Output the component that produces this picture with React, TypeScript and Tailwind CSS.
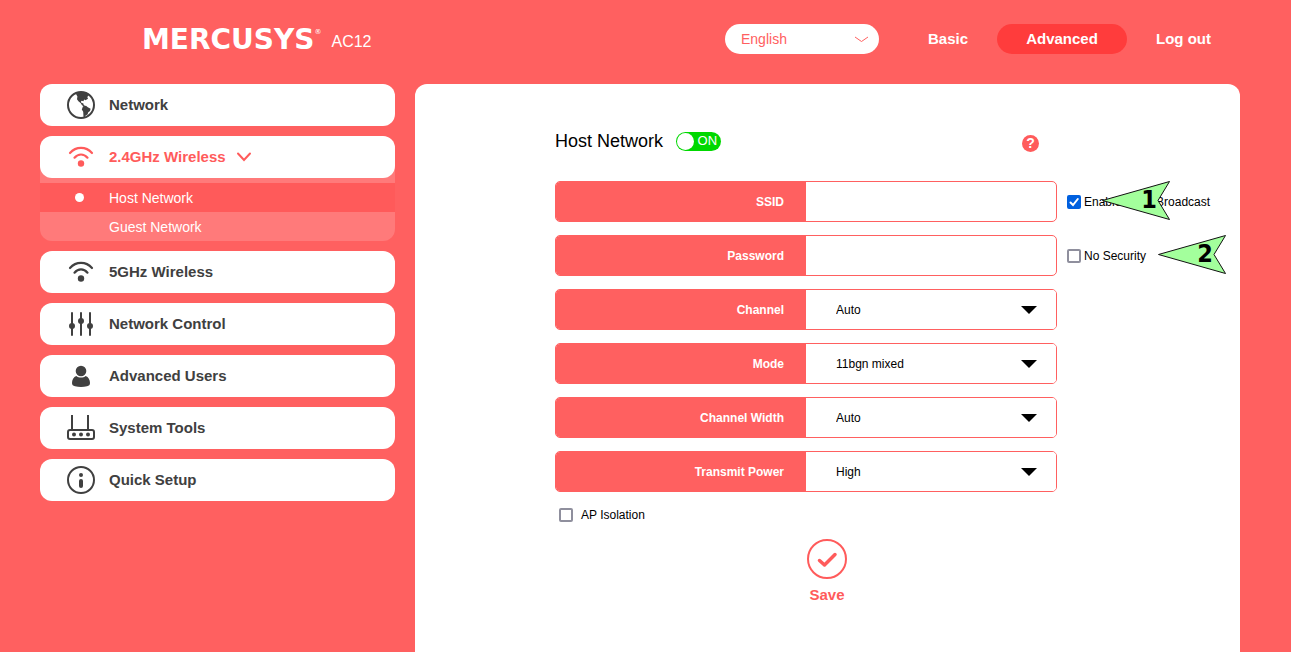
import { useState } from 'react';
import type { ReactNode } from 'react';

const GlobeIcon = () => (
  <svg width="28" height="28" viewBox="0 0 28 28" fill="none">
    <circle cx="14" cy="14" r="13" stroke="currentColor" strokeWidth="2" />
    <path
      d="M9 3 12 1h6l3 1.500.5 2L20.300 6l.7 1.800-2.500 1.400-1.300-.7-.8 1.700-1.600-.4-.9.800.6 1.400 1.700.3.6 1.700 1.200.8-1 .6-2-1.200-1.400-2.200-2.200-1.700L10 8.200l.4-2.600z"
      fill="currentColor"
    />
    <path d="m16 15.200 3-.4 1.800 1.500 2.800 1.500-.6 2.200-1.700 1.300-.8 2.200-1.800 1-1 2-1.200-.5-.3-5.200-1.400-2.400z" fill="currentColor" />
  </svg>
);

const WifiIcon = () => (
  <svg width="28" height="28" viewBox="0 0 28 28" fill="none" stroke="currentColor" strokeWidth="2.200" strokeLinecap="round">
    <path d="M3 10C9 3.200 19 3.200 25 10" />
    <path d="M7.500 14.700c3.700-4.300 9.300-4.300 13 0" />
    <circle cx="14" cy="20.500" r="3.200" fill="currentColor" stroke="none" />
  </svg>
);

const SlidersIcon = () => (
  <svg width="28" height="28" viewBox="0 0 28 28" fill="currentColor" stroke="currentColor" strokeWidth="2" strokeLinecap="round">
    <path d="M5 3v22M14 3v22M23 3v22" />
    <circle cx="5" cy="16" r="2" />
    <circle cx="14" cy="11" r="2" />
    <circle cx="23" cy="16" r="2" />
  </svg>
);

const UserIcon = () => (
  <svg width="28" height="28" viewBox="0 0 28 28" fill="currentColor">
    <circle cx="14" cy="9" r="5.300" />
    <path d="M9.300 14c2.700 2 6.700 2 9.400 0 2.800 1 4.300 3.700 4.300 7 0 1.800-1 2.900-3 3.300-3.600.9-8.400.9-12 0-2-.4-3-1.500-3-3.300 0-3.300 1.500-6 4.300-7z" />
  </svg>
);

const RouterIcon = () => (
  <svg width="28" height="28" viewBox="0 0 28 28" fill="none" stroke="currentColor" strokeWidth="2">
    <path d="M5 1v15M21 1v15" />
    <rect x="1" y="16" width="26" height="9" rx="2" />
    <g fill="currentColor" stroke="none">
      <circle cx="7" cy="20.500" r="2" />
      <circle cx="14" cy="20.500" r="2" />
      <circle cx="21" cy="20.500" r="2" />
    </g>
  </svg>
);

const InfoIcon = () => (
  <svg width="28" height="28" viewBox="0 0 28 28" fill="none" stroke="currentColor">
    <circle cx="14" cy="14" r="13" strokeWidth="2" />
    <circle cx="14" cy="9" r="2" fill="currentColor" stroke="none" />
    <path d="M14 15v5" strokeWidth="4" strokeLinecap="round" />
  </svg>
);

const menu = [
  { title: 'Network', icon: <GlobeIcon /> },
  { title: '2.4GHz Wireless', icon: <WifiIcon />, children: ['Host Network', 'Guest Network'] },
  { title: '5GHz Wireless', icon: <WifiIcon /> },
  { title: 'Network Control', icon: <SlidersIcon /> },
  { title: 'Advanced Users', icon: <UserIcon /> },
  { title: 'System Tools', icon: <RouterIcon /> },
  { title: 'Quick Setup', icon: <InfoIcon /> },
];

const selects = [
  { id: 'channel', label: 'Channel', options: ['Auto', '1', '6', '11'] },
  { id: 'mode', label: 'Mode', options: ['11bgn mixed', '11bg mixed'] },
  { id: 'width', label: 'Channel Width', options: ['Auto', '20MHz', '40MHz'] },
  { id: 'power', label: 'Transmit Power', options: ['High', 'Middle', 'Low'] },
];

const Marker = ({ text }: { text: string }) => (
  <svg width="70" height="42" viewBox="0 0 70 42">
    <path d="M1.500 20.500 68.500 1.500 57 20.500 68.500 39.500z" fill="#a3ff9c" stroke="#111" strokeWidth="1" />
    <text x="48" y="28" textAnchor="middle" fill="#000" className="font-['DejaVu_Sans_Condensed','DejaVu_Sans',sans-serif] text-[25px] font-bold">
      {text}
    </text>
  </svg>
);

type FieldProps = { id: string; label: string; children: ReactNode; extra?: ReactNode };

const Field = ({ id, label, children, extra }: FieldProps) => (
  <div className="flex items-center gap-2.5">
    <div className="flex h-[41px] w-[502px] overflow-hidden rounded-[5px] border border-[#ff6060]">
      <label htmlFor={id} className="flex w-1/2 items-center justify-end bg-[#ff6060] pr-[22px] font-bold text-white">
        {label}
      </label>
      <div className="relative w-1/2">{children}</div>
    </div>
    {extra}
  </div>
);

type CheckProps = { label: string; checked?: boolean; className?: string };

const Check = ({ label, checked = false, className = 'gap-[3px]' }: CheckProps) => (
  <label className={`flex items-center whitespace-nowrap ${className}`}>
    <span className="relative flex">
      <input
        type="checkbox"
        defaultChecked={checked}
        className="peer size-3.5 appearance-none rounded-xs border-2 border-[#8f8f9d] bg-white checked:border-[#0060df] checked:bg-[#0060df]"
      />
      <svg className="pointer-events-none absolute inset-0 hidden peer-checked:block" width="14" height="14" fill="none" stroke="#fff" strokeWidth="2" strokeLinecap="round">
        <path d="m3.500 7.500 2.500 2.500 4.800-6" />
      </svg>
    </span>
    {label}
  </label>
);

const Header = () => (
  <header className="flex h-[84px] items-center pb-1.5 pl-[102px] text-white">
    <div className="flex items-center gap-2.5">
      <h1 className="flex pt-0.5 font-['DejaVu_Sans',sans-serif] text-[28px] leading-8 font-bold">
        MERCUSYS<sup className="top-0 text-[7px] leading-4 font-normal">®</sup>
      </h1>
      <span className="pt-1.5 text-base">AC12</span>
    </div>
    <nav className="ml-auto flex items-center text-center text-[15px] leading-[30px] font-bold">
      <div className="relative mr-5">
        <select aria-label="Language" className="block h-[30px] w-[154px] appearance-none rounded-full bg-white px-4 text-sm font-normal text-[#ff6060]">
          <option>English</option>
        </select>
        <svg className="pointer-events-none absolute top-3 right-2.5" width="15" height="7" fill="none" stroke="#ff6060">
          <path d="m1 1 6.500 4.500L14 1" />
        </svg>
      </div>
      <a href="#basic" className="w-[98px]">Basic</a>
      <a href="#advanced" className="w-[130px] rounded-full bg-[#ff3c3c]">Advanced</a>
      <a href="#logout" className="w-[113px]">Log out</a>
    </nav>
  </header>
);

const Sidebar = () => (
  <nav className="flex w-[355px] shrink-0 flex-col gap-2.5">
    {menu.map((item) => (
      <div key={item.title} className={item.children ? 'rounded-xl bg-[#ff7a7a]' : ''}>
        <button
          className={`flex h-[42px] w-full items-center gap-3.5 rounded-xl bg-white pl-[27px] text-[15px] font-bold ${
            item.children ? 'text-[#ff5b5b]' : 'text-[#404040]'
          }`}
        >
          {item.icon}
          {item.title}
          {item.children && (
            <svg className="-ml-1" width="16" height="10" fill="none" stroke="currentColor" strokeWidth="2" strokeLinecap="round">
              <path d="m2 1.500 6 6.500 6-6.500" />
            </svg>
          )}
        </button>
        {item.children && (
          <div className="pt-[5px] text-sm text-white">
            {item.children.map((child, index) => (
              <a
                key={child}
                href={`#${child.toLowerCase().replace(' ', '-')}`}
                className={`flex h-[29px] items-center pl-[69px] ${index === 0 ? 'bg-[#ff5a5a]' : ''}`}
              >
                {index === 0 && <span className="mr-[25px] -ml-[34px] size-[9px] rounded-full bg-white" />}
                {child}
              </a>
            ))}
          </div>
        )}
      </div>
    ))}
  </nav>
);

const HostNetwork = () => {
  const [on, setOn] = useState(true);

  return (
    <main className="flex-1 rounded-t-xl bg-white pt-[46px] pl-[140px] text-xs text-black">
      <div className="flex h-[22px] w-[484px] items-center">
        <h2 className="text-lg leading-[22px]">Host Network</h2>
        <button
          role="switch"
          aria-checked={on}
          aria-label="Host Network"
          onClick={() => setOn(!on)}
          className={`ml-[13px] flex h-[19px] w-[45px] items-center justify-between rounded-full pr-1 pl-px text-[13px] text-white ${
            on ? 'bg-[#00d800]' : 'flex-row-reverse bg-gray-400'
          }`}
        >
          <span className="size-[17px] rounded-full bg-white" />
          {on ? 'ON' : 'OFF'}
        </button>
        <button aria-label="Help" className="mt-1 ml-auto size-[17px] rounded-full bg-[#ff5b5b] text-sm leading-[17px] font-bold text-white">
          ?
        </button>
      </div>

      <form className="mt-[29px]" onSubmit={(e) => e.preventDefault()}>
        <div className="flex flex-col gap-[13px]">
          <Field
            id="ssid"
            label="SSID"
            extra={
              <div className="relative">
                <Check label="Enable SSID Broadcast" checked />
                <div className="pointer-events-none absolute -top-3.5 left-[34px]">
                  <Marker text="1" />
                </div>
              </div>
            }
          >
            <input id="ssid" type="text" className="size-full px-[30px] outline-none" />
          </Field>
          <Field
            id="password"
            label="Password"
            extra={
              <div className="relative">
                <Check label="No Security" />
                <div className="pointer-events-none absolute -top-3.5 left-[90px]">
                  <Marker text="2" />
                </div>
              </div>
            }
          >
            <input id="password" type="password" className="size-full px-[30px] outline-none" />
          </Field>
          {selects.map((item) => (
            <Field key={item.id} id={item.id} label={item.label}>
              <select id={item.id} className="size-full appearance-none bg-white px-[30px] outline-none">
                {item.options.map((option) => (
                  <option key={option}>{option}</option>
                ))}
              </select>
              <svg className="pointer-events-none absolute top-4 right-[19px]" width="16" height="8">
                <path d="M0 0h16L8 8z" fill="#000" />
              </svg>
            </Field>
          ))}
        </div>

        <div className="mt-[15px] ml-1 flex">
          <Check label="AP Isolation" className="gap-2" />
        </div>

        <button className="mt-4 ml-[252px] flex flex-col items-center gap-1.5 text-[15px] leading-5 font-bold text-[#ff5b5b]">
          <svg width="40" height="40" fill="none" stroke="currentColor">
            <circle cx="20" cy="20" r="19" strokeWidth="2" />
            <path d="m12.500 21.500 5 4.500 10.500-10.500" strokeWidth="3.500" strokeLinecap="round" strokeLinejoin="round" />
          </svg>
          Save
        </button>
      </form>
    </main>
  );
};

export default function App() {
  return (
    <div className="flex min-h-screen flex-col bg-[#ff6060] pr-[51px] pl-10 font-['Liberation_Sans',Arial,sans-serif]">
      <Header />
      <div className="flex flex-1 gap-5">
        <Sidebar />
        <HostNetwork />
      </div>
    </div>
  );
}
